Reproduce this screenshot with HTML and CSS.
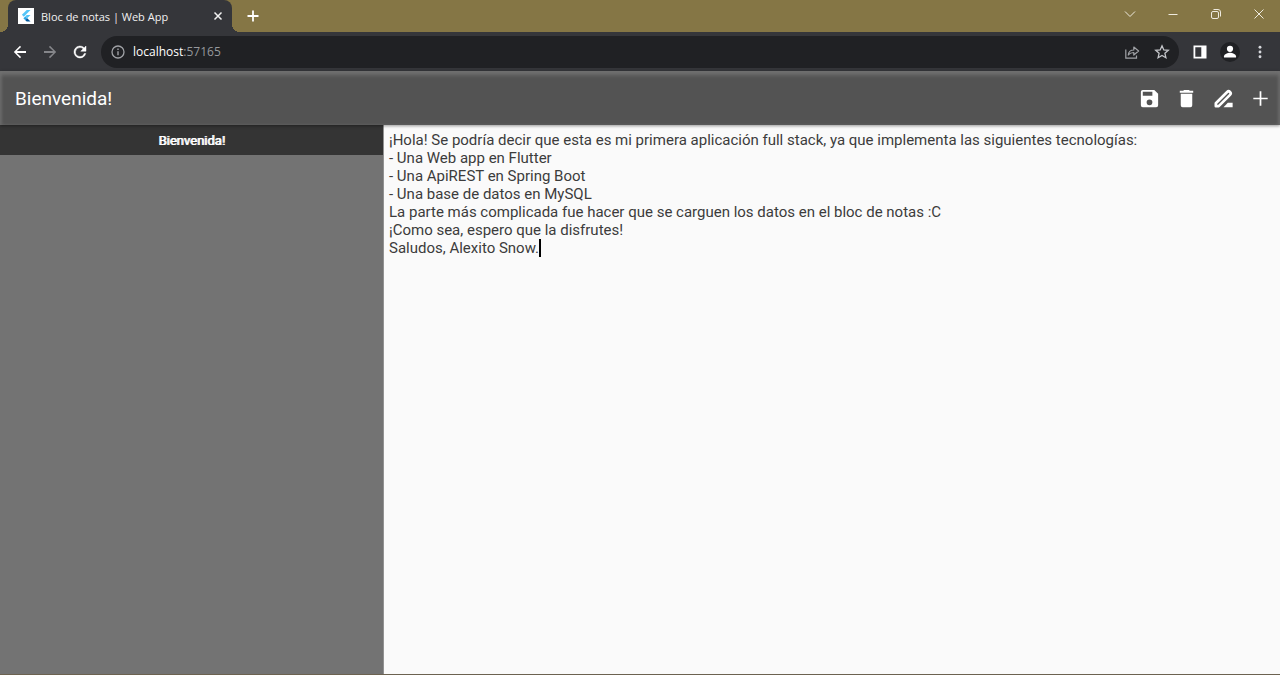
FILE: index.html
```html
<!DOCTYPE html>
<html lang="es">
<head>
<meta charset="utf-8">
<meta name="viewport" content="width=device-width, initial-scale=1">
<title>Bloc de notas | Web App</title>
<link rel="stylesheet" href="styles.css">
</head>
<body>
<div class="window">
  <header class="tabstrip">
    <div class="tab">
      <svg class="favicon" viewBox="0 0 16 16" aria-hidden="true"><path fill="#fff" d="M0 0h16v16H0z"/><path fill="#54c5f8" d="M8.700 2h3.800L5.800 8.700l-1.900-1.900z"/><path fill="#54c5f8" d="M8.700 7h3.800L9.200 10.300l-1.900-1.900z"/><path fill="#29a8e8" d="M5.400 10.300l1.900-1.900 1.900 1.900-1.900 1.900z"/><path fill="#01579b" d="M7.300 12.200l1.900-1.900 3.300 3.300H8.700z"/></svg>
      <span class="tab-title">Bloc de notas | Web App</span>
      <button class="tab-close" aria-label="Cerrar pestaña"><svg viewBox="0 0 10 10" width="10" height="10"><path d="M1.500 1.500l7 7m0-7l-7 7" fill="none" stroke="#f1f1f1" stroke-width="1.500"/></svg></button>
    </div>
    <button class="new-tab" aria-label="Nueva pestaña"><svg viewBox="0 0 12 12" width="12" height="12"><path d="M6 .5v11M.5 6h11" stroke="#fff" stroke-width="1.800"/></svg></button>
    <div class="window-controls">
      <button aria-label="Buscar pestañas"><svg viewBox="0 0 12 12"><path d="M1 3.500l5 5 5-5"/></svg></button>
      <button aria-label="Minimizar"><svg viewBox="0 0 12 12"><path d="M1.500 6.500h9"/></svg></button>
      <button aria-label="Restaurar"><svg viewBox="0 0 12 12"><rect x="1.500" y="3.500" width="7" height="7" rx="1.500"/><path d="M3.500 1.500h4.500a2.500 2.500 0 0 1 2.500 2.500v4.500"/></svg></button>
      <button aria-label="Cerrar"><svg viewBox="0 0 12 12"><path d="M1.500 1.500l9 9m0-9l-9 9"/></svg></button>
    </div>
  </header>

  <nav class="toolbar">
    <button class="nav-button" aria-label="Atrás"><svg viewBox="0 0 24 24"><path fill="#fff" d="M20 10.800H7.800l5.600-5.600L12 3.800 3.800 12l8.200 8.200 1.400-1.400-5.600-5.600H20z"/></svg></button>
    <button class="nav-button" aria-label="Adelante"><svg viewBox="0 0 24 24"><path fill="#85868a" d="M4 10.800h12.200l-5.600-5.600L12 3.800l8.200 8.200-8.200 8.200-1.400-1.400 5.600-5.600H4z"/></svg></button>
    <button class="nav-button" aria-label="Recargar"><svg viewBox="0 0 24 24"><path fill="#fff" stroke="#fff" stroke-width=".6" d="M17.650 6.350A8 8 0 1 0 19.730 14h-2.080A6 6 0 1 1 12 6c1.660 0 3.140.69 4.220 1.780L13 11h7V4z"/></svg></button>
    <div class="address">
      <svg class="info" viewBox="0 0 14 14" aria-hidden="true"><circle cx="7" cy="7" r="6" fill="none" stroke="#a0a2a6" stroke-width="1.300"/><path d="M7 6.200v4M7 3.600v1.500" stroke="#a0a2a6" stroke-width="1.400"/></svg>
      <a class="url" href="#"><span class="host">localhost</span>:57165</a>
      <button aria-label="Compartir"><svg viewBox="0 0 16 16" fill="none" stroke="#a0a2a6" stroke-width="1.200"><path d="M1.800 5.500v8.700h10.700v-2.700"/><path d="M4.300 11c.3-3.200 2.300-5 5.500-5V3l4.800 4-4.800 4V8.500c-2.500 0-4.200.8-5.500 2.500z" stroke-linejoin="round"/></svg></button>
      <button aria-label="Marcador"><svg viewBox="0 0 16 16"><path d="M8 1.800l1.800 4.100 4.500.4-3.400 3 1 4.400L8 11.400l-3.900 2.300 1-4.400-3.400-3 4.500-.4z" fill="none" stroke="#c4c6ca" stroke-width="1.300"/></svg></button>
    </div>
    <button class="nav-button" aria-label="Panel lateral"><svg class="panel" viewBox="0 0 14 14"><path fill="#fff" fill-rule="evenodd" d="M.5.500h13v13H.5zM2.300 2.300v9.400h6V2.300z"/></svg></button>
    <button class="nav-button profile" aria-label="Perfil"><svg viewBox="0 0 20 20"><circle cx="10" cy="6.800" r="3.100" fill="#fff"/><path fill="#fff" d="M4 15.500v-1.300c0-2.300 4-3.500 6-3.500s6 1.200 6 3.500v1.300z"/></svg></button>
    <button class="nav-button" aria-label="Menú"><svg viewBox="0 0 20 20" fill="#d8dade"><circle cx="10" cy="4.700" r="1.600"/><circle cx="10" cy="10" r="1.600"/><circle cx="10" cy="15.300" r="1.600"/></svg></button>
  </nav>

  <header class="appbar">
    <h1>Bienvenida!</h1>
    <div class="actions">
      <button aria-label="Guardar"><svg viewBox="0 0 24 24"><path d="M17 3H5a2 2 0 0 0-2 2v14a2 2 0 0 0 2 2h14a2 2 0 0 0 2-2V7zm-5 16a3 3 0 1 1 0-6 3 3 0 0 1 0 6zm3-10H5V5h10z"/></svg></button>
      <button aria-label="Eliminar"><svg viewBox="0 0 24 24"><path d="M6 19a2 2 0 0 0 2 2h8a2 2 0 0 0 2-2V7H6zM19 4h-3.500l-1-1h-5l-1 1H5v2h14z"/></svg></button>
      <button aria-label="Renombrar"><svg viewBox="0 0 24 24"><path d="M4 20v-3L15.800 5.200a2.100 2.100 0 0 1 3 3L7 20z" fill="none" stroke="#fff" stroke-width="2.800" stroke-linejoin="round"/><path d="M12 21l4.500-4.500H21.500V21z"/></svg></button>
      <button aria-label="Agregar"><svg viewBox="0 0 24 24"><path d="M19.500 12.900h-6.600v6.600h-1.800v-6.600H4.500v-1.800h6.600V4.500h1.800v6.600h6.600z"/></svg></button>
    </div>
  </header>

  <main class="content">
    <aside class="notes"><button class="note">Bienvenida!</button></aside>
    <section class="editor">
      <textarea class="text" aria-label="Contenido de la nota" spellcheck="false">¡Hola! Se podría decir que esta es mi primera aplicación full stack, ya que implementa las siguientes tecnologías:
- Una Web app en Flutter
- Una ApiREST en Spring Boot
- Una base de datos en MySQL
La parte más complicada fue hacer que se carguen los datos en el bloc de notas :C
¡Como sea, espero que la disfrutes!
Saludos, Alexito Snow.</textarea>
      <span class="caret"></span>
    </section>
  </main>
</div>
</body>
</html>
```

FILE: styles.css
```css
* { box-sizing: border-box; }
body { margin: 0; font-family: Roboto, sans-serif; }
button { display: flex; align-items: center; justify-content: center; padding: 0; border: 0; background: none; font: inherit; color: inherit; flex: none; }

.window { display: flex; flex-direction: column; min-height: 100vh; border-bottom: 1px solid #6c6250; }

.tabstrip { display: flex; height: 32px; padding-left: 8px; background: #857645; }
.tab {
  position: relative;
  display: flex;
  align-items: center;
  width: 224px;
  padding: 0 8px 0 10px;
  border-radius: 8px 8px 0 0;
  background: #35363a;
  color: #f1f1f1;
  font: 11px "Open Sans", sans-serif;
}
.tab::before, .tab::after { content: ""; position: absolute; bottom: 0; width: 8px; height: 8px; }
.tab::before { right: 100%; background: radial-gradient(circle at 0 0, transparent 8px, #35363a 8px); }
.tab::after { left: 100%; background: radial-gradient(circle at 100% 0, transparent 8px, #35363a 8px); }
.favicon { width: 16px; height: 16px; margin-right: 7px; }
.tab-title { flex: 1; white-space: nowrap; }
.tab-close { width: 12px; height: 16px; }
.new-tab { width: 24px; margin-left: 9px; }
.window-controls { display: flex; margin-left: auto; }
.window-controls button { width: 43px; height: 27px; }
.window-controls svg { width: 12px; height: 12px; fill: none; stroke: #eeeade; stroke-width: 1; }

.toolbar { display: flex; align-items: center; height: 39px; padding: 0 5px; background: #35363a; }
.nav-button { width: 30px; height: 30px; }
.nav-button svg { width: 18px; height: 18px; }
.nav-button .panel { width: 14px; height: 14px; }
.nav-button.profile svg { width: 20px; height: 20px; border-radius: 50%; background: #202124; }
.address {
  display: flex;
  align-items: center;
  flex: 1;
  height: 32px;
  margin: 0 6px;
  padding: 0 2px 0 10px;
  border-radius: 16px;
  background: #202124;
}
.info { width: 14px; height: 14px; margin-right: 8px; }
.url { flex: 1; color: #96989c; font: 12px "Open Sans", sans-serif; text-decoration: none; }
.host { color: #fff; }
.address button { width: 30px; height: 30px; }
.address button svg { width: 16px; height: 16px; }

.appbar {
  position: relative;
  z-index: 1;
  display: flex;
  align-items: center;
  justify-content: space-between;
  height: 54px;
  padding: 2px 0 0 15px;
  background: #535353;
  box-shadow: inset 0 4px 4px #707070, inset 2px 0 3px #626262, inset -2px 0 3px #626262, 0 1px 3px rgba(0, 0, 0, .4);
  color: #fff;
}
h1 { margin: 0; font-size: 19px; font-weight: 400; line-height: 24px; }
.actions { display: flex; padding: 0 1px 2px 0; }
.actions button { width: 37px; height: 37px; }
.actions svg { width: 23px; height: 23px; fill: #fff; }

.content { display: flex; flex: 1; }
.notes { width: 30%; border-right: 1px solid #929292; background: #737373; }
.note { width: 100%; height: 30px; background: #343434; color: #fff; font-size: 13px; text-shadow: 1px 0 #fff; }
.editor { position: relative; display: flex; flex: 1; background: #fafafa; }
.text {
  flex: 1;
  padding: 6px 5px;
  border: 0;
  outline: 0;
  resize: none;
  background: none;
  color: #3c3c3c;
  font: 15px/18px Roboto, sans-serif;
}
.caret { position: absolute; top: 114px; left: 155px; width: 2px; height: 18px; background: #000; }
```
